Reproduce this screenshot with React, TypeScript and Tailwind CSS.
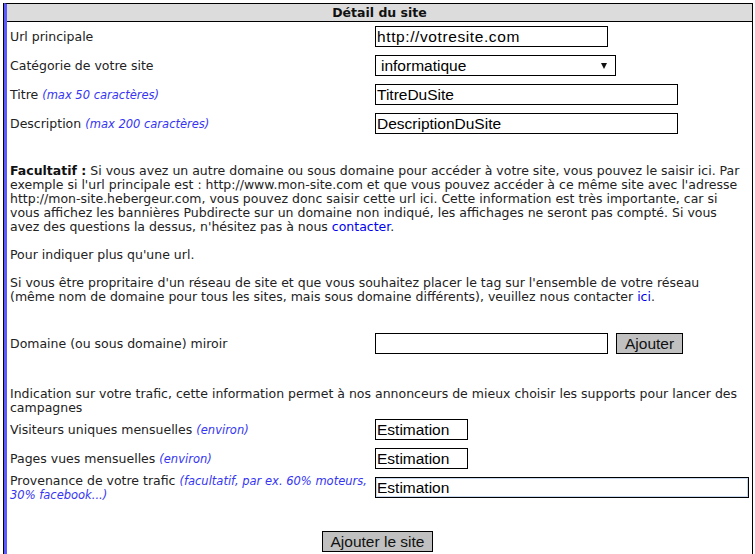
import type { ReactNode } from "react";

const inputBase =
  "h-[21px] shrink-0 border border-black bg-white px-[1px] text-[15.5px] leading-[19px] text-black outline-none font-['Liberation_Sans',Arial,sans-serif]";

function Hint({ children }: { children: ReactNode }) {
  return <span className="text-[11.5px] italic text-[#3535f2]">{children}</span>;
}

function Row({ label, hint, children }: { label: string; hint?: string; children: ReactNode }) {
  return (
    <div className="flex min-h-[29px] items-center">
      <div className="w-[365px] shrink-0">
        {label} {hint && <Hint>{hint}</Hint>}
      </div>
      <div className="flex items-center gap-[8px]">{children}</div>
    </div>
  );
}

function GreyButton({ children }: { children: ReactNode }) {
  return (
    <button className="h-[21px] border border-black bg-[#c0c0c0] px-[8px] text-[15.5px] leading-[19px] text-[#111] font-['Liberation_Sans',Arial,sans-serif]">
      {children}
    </button>
  );
}

export default function App() {
  return (
    <div className="min-h-screen bg-white pl-[3px] pr-[2px] pt-[3px] font-['DejaVu_Sans',Verdana,sans-serif] text-[12.5px] leading-[14px] text-[#222]">
      <div className="border-l border-black">
        <div className="border-l-[3px] border-t border-r border-l-[#5a5aff] border-t-black border-r-black pb-4">
          <div className="h-[18px] border-b border-black bg-[#dcdcdc] text-center font-bold leading-[17px] text-[#111]">
            Détail du site
          </div>

          <div className="pl-[3px] pr-[7px]">
            <Row label="Url principale">
              <input className={`${inputBase} w-[233px] tracking-[0.6px]`} defaultValue="http://votresite.com" />
            </Row>
            <Row label="Catégorie de votre site">
              <div className="flex h-[21px] w-[241px] items-center justify-between border border-black bg-white pl-[5px] pr-[8px] text-[15.5px] text-black font-['Liberation_Sans',Arial,sans-serif]">
                <span>informatique</span>
                <svg width="6" height="6" viewBox="0 0 6 6">
                  <path d="M0 0h6L3 6z" fill="#111" />
                </svg>
              </div>
            </Row>
            <Row label="Titre" hint="(max 50 caractères)">
              <input className={`${inputBase} w-[303px]`} defaultValue="TitreDuSite" />
            </Row>
            <Row label="Description" hint="(max 200 caractères)">
              <input className={`${inputBase} w-[303px]`} defaultValue="DescriptionDuSite" />
            </Row>

            <p className="mt-[26px]">
              <b className="text-[#111]">Facultatif :</b> Si vous avez un autre domaine ou sous domaine pour accéder à votre site, vous
              pouvez le saisir ici. Par exemple si l'url principale est : http://www.mon-site.com et que vous pouvez accéder à ce même
              site avec l'adresse http://mon-site.hebergeur.com, vous pouvez donc saisir cette url ici. Cette information est très
              importante, car si vous affichez les bannières Pubdirecte sur un domaine non indiqué, les affichages ne seront pas compté.
              Si vous avez des questions la dessus, n'hésitez pas à nous <a className="text-[#0000ee]">contacter</a>.
            </p>
            <p className="mt-[14px]">Pour indiquer plus qu'une url.</p>
            <p className="mt-[14px]">
              Si vous être propritaire d'un réseau de site et que vous souhaitez placer le tag sur l'ensemble de votre réseau (même nom
              de domaine pour tous les sites, mais sous domaine différents), veuillez nous contacter{" "}
              <a className="text-[#0000ee]">ici</a>.
            </p>

            <div className="mt-[25px]">
              <Row label="Domaine (ou sous domaine) miroir">
                <input className={`${inputBase} w-[233px]`} />
                <GreyButton>Ajouter</GreyButton>
              </Row>
            </div>

            <p className="mt-[29px]">
              Indication sur votre trafic, cette information permet à nos annonceurs de mieux choisir les supports pour lancer des
              campagnes
            </p>

            <div>
              <Row label="Visiteurs uniques mensuelles" hint="(environ)">
                <input className={`${inputBase} w-[93px]`} defaultValue="Estimation" />
              </Row>
              <Row label="Pages vues mensuelles" hint="(environ)">
                <input className={`${inputBase} w-[93px]`} defaultValue="Estimation" />
              </Row>
              <Row label="Provenance de votre trafic" hint="(facultatif, par ex. 60% moteurs, 30% facebook...)">
                <input
                  className={`${inputBase} w-[374px] border-[#3c6cb4] shadow-[inset_0_0_0_1px_#c9d9f0]`}
                  defaultValue="Estimation"
                />
              </Row>
            </div>

            <div className="mt-[29px] flex justify-center">
              <GreyButton>Ajouter le site</GreyButton>
            </div>
          </div>
        </div>
      </div>
    </div>
  );
}
